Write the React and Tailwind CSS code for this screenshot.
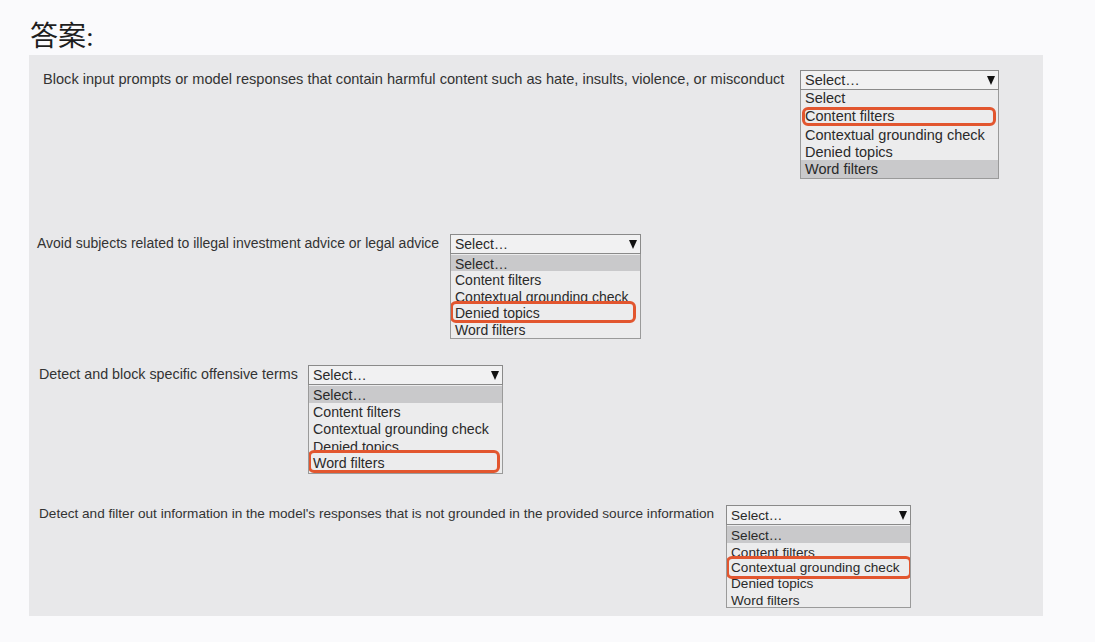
import React from "react";

function Arrow() {
  return (
    <svg width="8" height="10" viewBox="0 0 8 10" className="block">
      <polygon points="0,1 8,1 4,10" fill="#111" />
    </svg>
  );
}

function Item({ text, h, off, hl, red, fs }) {
  return (
    <div className={`relative overflow-hidden ${h} ${hl ? "bg-[#c9c9cb]" : ""}`}>
      <div className={`pl-[4px] whitespace-nowrap leading-[17px] text-[#2a2a2a] ${off} ${fs}`}>
        {text}
      </div>
      {red && (
        <div
          className={`absolute top-0 bottom-0 border-[3px] border-[#e2562f] rounded-[6px] ${red}`}
        />
      )}
    </div>
  );
}

function Dropdown({ width, items, fs }) {
  return (
    <div className={`flex flex-col font-['Liberation_Sans',Arial,sans-serif] ${width}`}>
      <div className="h-[20px] border border-[#8a8a8a] bg-[#f1f1f2] flex items-center justify-between pl-[4px] pr-[3px]">
        <span className={`text-[#2a2a2a] leading-[17px] ${fs}`}>Select…</span>
        <Arrow />
      </div>
      <div className="border border-t-0 border-[#9a9a9a] bg-[#ececed] pt-[1px]">
        {items.map((it, i) => (
          <Item key={i} {...it} fs={fs} />
        ))}
      </div>
    </div>
  );
}

function Row({ rowClass, labelClass, label, width, items, fs }) {
  return (
    <div className={`flex items-start ${rowClass}`}>
      <div
        className={`leading-[18px] text-[#333] whitespace-nowrap font-['Liberation_Sans',Arial,sans-serif] ${labelClass}`}
      >
        {label}
      </div>
      <Dropdown width={width} items={items} fs={fs} />
    </div>
  );
}

export default function App() {
  return (
    <div className="w-[1095px] h-[642px] bg-[#fafafc] overflow-hidden">
      <div className="pt-[21px] pl-[30px] h-[51px] text-[28px] leading-[32px] text-[#1e1e1e] font-['Liberation_Serif','Noto_Sans_CJK_SC',serif]">
        答案:
      </div>
      <div className="mt-[4px] ml-[29px] w-[1014px] h-[561px] bg-[#e8e8ea] flex flex-col">
        <Row
          rowClass="mt-[15px] pl-[14px]"
          labelClass="w-[757px] text-[14.6px]"
          label="Block input prompts or model responses that contain harmful content such as hate, insults, violence, or misconduct"
          width="w-[199px]"
          fs="text-[14.5px]"
          items={[
            { text: "Select", h: "h-[16px]", off: "mt-[-1px]" },
            { text: "Content filters", h: "h-[19px]", off: "mt-[1px]", red: "left-[1px] right-[2px]" },
            { text: "Contextual grounding check", h: "h-[17px]", off: "mt-[1px]" },
            { text: "Denied topics", h: "h-[17px]", off: "mt-[1px]" },
            { text: "Word filters", h: "h-[18px]", off: "mt-[1px]", hl: true },
          ]}
        />
        <Row
          rowClass="mt-[55px] pl-[8px]"
          labelClass="w-[413px] text-[14px]"
          label="Avoid subjects related to illegal investment advice or legal advice"
          width="w-[191px]"
          fs="text-[14px]"
          items={[
            { text: "Select…", h: "h-[16px]", off: "mt-[1px]", hl: true },
            { text: "Content filters", h: "h-[17px]", off: "mt-[1px]" },
            { text: "Contextual grounding check", h: "h-[13px]", off: "mt-[1px]" },
            { text: "Denied topics", h: "h-[22px]", off: "mt-[4px]", red: "left-[-1px] right-[4px]" },
            { text: "Word filters", h: "h-[15px]", off: "mt-[-1px]" },
          ]}
        />
        <Row
          rowClass="mt-[26px] pl-[10px]"
          labelClass="w-[269px] text-[14.3px]"
          label="Detect and block specific offensive terms"
          width="w-[195px]"
          fs="text-[14.2px]"
          items={[
            { text: "Select…", h: "h-[17px]", off: "mt-[1px]", hl: true },
            { text: "Content filters", h: "h-[17px]", off: "mt-[1px]" },
            { text: "Contextual grounding check", h: "h-[18px]", off: "mt-[1px]" },
            { text: "Denied topics", h: "h-[12px]", off: "mt-[1px]" },
            { text: "Word filters", h: "h-[23px]", off: "mt-[5px]", red: "left-[-1px] right-[2px]" },
          ]}
        />
        <Row
          rowClass="mt-[31px] pl-[10px]"
          labelClass="w-[687px] text-[13.6px]"
          label="Detect and filter out information in the model's responses that is not grounded in the provided source information"
          width="w-[185px]"
          fs="text-[13.6px]"
          items={[
            { text: "Select…", h: "h-[17px]", off: "mt-[1px]", hl: true },
            { text: "Content filters", h: "h-[13px]", off: "mt-[1px]" },
            { text: "Contextual grounding check", h: "h-[23px]", off: "mt-[3px]", red: "left-[-1px] right-[-2px]" },
            { text: "Denied topics", h: "h-[12px]", off: "mt-[-4px]" },
            { text: "Word filters", h: "h-[16px]", off: "mt-[1px]" },
          ]}
        />
      </div>
    </div>
  );
}
